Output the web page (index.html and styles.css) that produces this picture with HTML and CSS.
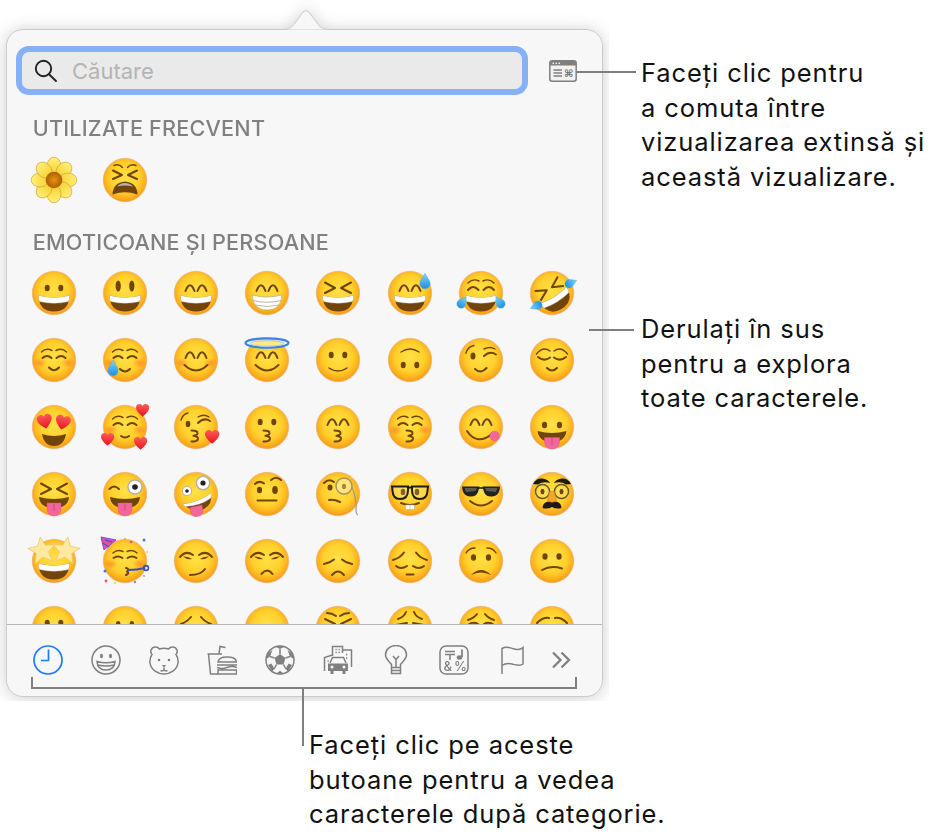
FILE: index.html
```html
<!DOCTYPE html>
<html lang="ro">
<head>
  <meta charset="UTF-8" />
  <title>Vizualizator de caractere</title>
  <link rel="stylesheet" href="styles.css">
</head>
<body>

  <!-- shared pieces for the emoji -->
  <svg class="defs" width="0" height="0" aria-hidden="true">
    <defs>
      <radialGradient id="skin" cx="50%" cy="44%" r="56%">
        <stop offset="0" stop-color="#ffe146"/>
        <stop offset=".6" stop-color="#ffd02c"/>
        <stop offset=".86" stop-color="#fbae1c"/>
        <stop offset="1" stop-color="#f49a16"/>
      </radialGradient>
      <radialGradient id="cheek">
        <stop offset="0" stop-color="#ff6a2c" stop-opacity=".55"/>
        <stop offset="1" stop-color="#ff6a2c" stop-opacity="0"/>
      </radialGradient>
      <linearGradient id="water" x1="0" y1="0" x2="0" y2="1">
        <stop offset="0" stop-color="#7fd6fa"/>
        <stop offset="1" stop-color="#1c8fe2"/>
      </linearGradient>
      <linearGradient id="red" x1="0" y1="0" x2="0" y2="1">
        <stop offset="0" stop-color="#ff5a5a"/>
        <stop offset="1" stop-color="#e3161f"/>
      </linearGradient>
      <radialGradient id="bloom">
        <stop offset="0" stop-color="#e8920f"/>
        <stop offset="1" stop-color="#ac5f06"/>
      </radialGradient>
      <linearGradient id="leaf" x1="0" y1="0" x2="0" y2="1">
        <stop offset="0" stop-color="#fff07a"/>
        <stop offset="1" stop-color="#f7cf30"/>
      </linearGradient>

      <circle id="face" cx="22" cy="22" r="21.7" fill="url(#skin)" stroke="#e8a878" stroke-width=".6"/>
      <g id="blush">
        <ellipse cx="7.5" cy="25" rx="7" ry="5" fill="url(#cheek)"/>
        <ellipse cx="36.5" cy="25" rx="7" ry="5" fill="url(#cheek)"/>
      </g>
      <g id="dots">
        <ellipse class="ink" cx="15.2" cy="17" rx="2.5" ry="3.3"/>
        <ellipse class="ink" cx="28.8" cy="17" rx="2.5" ry="3.3"/>
      </g>
      <g id="arches">
        <path class="ln" d="M11.5 20Q16 8.500 20.500 20"/>
        <path class="ln" d="M23.500 20Q28 8.500 32.500 20"/>
      </g>
      <g id="squint">
        <path class="ln" d="M9 11.500L19 17L9 22"/>
        <path class="ln" d="M35 11.500L25 17L35 22"/>
      </g>
      <g id="calm">
        <path class="thin" d="M9.500 14Q14 9.500 20 12.500"/>
        <path class="thin" d="M34.500 14Q30 9.500 24 12.500"/>
        <path class="ln" d="M10.500 20Q15 16 19.500 20"/>
        <path class="ln" d="M33.500 20Q29 16 24.500 20"/>
      </g>
      <g id="grin">
        <path class="ink" d="M6.500 24.500Q22 28.500 37.500 24.500Q37 40.500 22 40.500Q7 40.500 6.500 24.500Z"/>
        <path fill="#fff" stroke="#c9c2b4" stroke-width=".4" d="M6.500 24.500Q22 28.500 37.500 24.500Q37.500 28 36.500 30.500Q22 34 7.500 30.500Q6.500 28 6.500 24.500Z"/>
      </g>
      <path id="drop" fill="url(#water)" stroke="#4aa6e0" stroke-width=".3" d="M0-6C2-2 4-.5 4 2A4 4 0 0 1-4 2C-4-.5-2-2 0-6Z"/>
      <path id="heart" fill="url(#red)" d="M6 11.500C1 7.500 0 5 0 3.200C0 1 1.800 0 3.300 0C4.600 0 5.500.8 6 1.800C6.500.8 7.400 0 8.700 0C10.200 0 12 1 12 3.200C12 5 11 7.500 6 11.500Z"/>
      <path id="kiss" class="ln" d="M18.500 25.500Q25 25.500 24.500 28.500Q24 30.500 20.500 30.800Q25.500 31.500 25 34Q24 37 18.500 36.500"/>
      <g id="tongue-mouth">
        <path class="ink" d="M7.500 26Q22 30 36.500 26Q35 37 22 37Q9 37 7.500 26Z"/>
        <path fill="#f2679b" stroke="#e04b84" stroke-width=".4" d="M14.500 32.500H29.500V37A7.500 7 0 0 1 14.500 37Z"/>
        <path fill="none" stroke="#c9386f" stroke-width=".7" d="M22 33V39"/>
      </g>
      <g id="tongue-grin">
        <path class="ink" d="M7 25Q22 29 37 25Q36 36 22 36Q8 36 7 25Z"/>
        <path fill="#f2679b" stroke="#e04b84" stroke-width=".4" d="M15 31H29V37A7 7 0 0 1 15 37Z"/>
        <path fill="none" stroke="#c9386f" stroke-width=".7" d="M22 32V39"/>
      </g>
      <path id="star" fill="#ffe9a0" stroke="#eec468" stroke-width=".5" d="M0-9L2.700-3 9.500-2.500 4.300 1.800 6 8.500 0 5 -6 8.500-4.300 1.800-9.500-2.500-2.700-3Z"/>
    </defs>
  </svg>

  <main class="figure">
    <div class="stage">
      <section class="popover">
        <svg class="beak" viewBox="0 0 48 24" width="48" height="24" aria-hidden="true">
          <path class="beak-fill" d="M0 23.500C7 23.500 9 22 12 18.500L21 6Q24 3 27 6L36 18.500C39 22 41 23.500 48 23.500Z"/>
          <path class="beak-edge" d="M0 23.500C7 23.500 9 22 12 18.500L21 6Q24 3 27 6L36 18.500C39 22 41 23.500 48 23.500"/>
        </svg>

        <div class="search-row">
          <label class="search">
            <svg class="search-ic" viewBox="0 0 24 24" width="24" height="24" aria-hidden="true">
              <circle cx="9.500" cy="9.500" r="7.700"/>
              <path d="M15 15.200L22 22"/>
            </svg>
            <input type="text" placeholder="Căutare" />
          </label>
          <svg class="viewer-ic" viewBox="0 0 28 22" width="28" height="22" aria-hidden="true">
            <rect class="viewer-frame" x=".8" y=".8" width="26.400" height="20.400" rx="2.500"/>
            <path class="viewer-bar" d="M1 3.300A2.500 2.500 0 0 1 3.500 1H24.500A2.500 2.500 0 0 1 27 3.300V5.500H1Z"/>
            <circle class="viewer-dot" cx="4.300" cy="3.300" r=".9"/>
            <circle class="viewer-dot" cx="7.300" cy="3.300" r=".9"/>
            <circle class="viewer-dot" cx="10.300" cy="3.300" r=".9"/>
            <path class="viewer-line" d="M4.500 10H13M4.500 13H13M4.500 16H13"/>
            <text class="viewer-cmd" x="15" y="17">⌘</text>
          </svg>
        </div>

        <div class="scroller">
          <h2 class="group-title first">UTILIZATE FRECVENT</h2>
          <div class="emoji-grid">
            <svg class="emoji" viewBox="0 0 44 44">
              <g class="petal"><ellipse cx="22" cy="8" rx="7" ry="8.800"/><ellipse cx="22" cy="8" rx="7" ry="8.800" transform="rotate(45 22 22)"/><ellipse cx="22" cy="8" rx="7" ry="8.800" transform="rotate(90 22 22)"/><ellipse cx="22" cy="8" rx="7" ry="8.800" transform="rotate(135 22 22)"/><ellipse cx="22" cy="8" rx="7" ry="8.800" transform="rotate(180 22 22)"/><ellipse cx="22" cy="8" rx="7" ry="8.800" transform="rotate(225 22 22)"/><ellipse cx="22" cy="8" rx="7" ry="8.800" transform="rotate(270 22 22)"/><ellipse cx="22" cy="8" rx="7" ry="8.800" transform="rotate(315 22 22)"/></g>
              <circle cx="22" cy="22" r="8.300" fill="url(#bloom)"/>
            </svg>
            <svg class="emoji" viewBox="0 0 44 44"><use href="#face"/>
              <path class="thin" d="M11 7.500Q16 5.500 19.500 9.500"/><path class="thin" d="M33 7.500Q28 5.500 24.500 9.500"/>
              <path class="ln" d="M10 12.500L19 17L10 21"/><path class="ln" d="M34 12.500L25 17L34 21"/>
              <path class="ink" d="M9.500 36.500Q10 24.500 22 23.500Q34 24.500 34.500 36.500Q22 32 9.500 36.500Z"/>
              <path fill="#b9b3a8" d="M14 28.500Q17 25 22 25Q27 25 30 28.500Q22 26.500 14 28.500Z"/>
            </svg>
          </div>

          <h2 class="group-title">EMOTICOANE ȘI PERSOANE</h2>
          <div class="emoji-grid">
            <!-- row 1 -->
            <svg class="emoji" viewBox="0 0 44 44"><use href="#face"/><use href="#dots"/><use href="#grin"/></svg>
            <svg class="emoji" viewBox="0 0 44 44"><use href="#face"/><ellipse class="ink" cx="15.200" cy="15" rx="2.600" ry="5.500"/><ellipse class="ink" cx="28.800" cy="15" rx="2.600" ry="5.500"/><use href="#grin"/></svg>
            <svg class="emoji" viewBox="0 0 44 44"><use href="#face"/><use href="#arches"/><use href="#grin"/></svg>
            <svg class="emoji" viewBox="0 0 44 44"><use href="#face"/><use href="#arches"/>
              <path fill="#fff" stroke="#a89f8c" stroke-width=".6" d="M7 24Q22 28 37 24Q36 39 22 39Q8 39 7 24Z"/>
              <path fill="none" stroke="#b7ad98" stroke-width=".9" d="M8 29.500Q22 33 36 29.500M10 34Q22 37 34 34"/>
            </svg>
            <svg class="emoji" viewBox="0 0 44 44"><use href="#face"/><use href="#squint"/><use href="#grin"/></svg>
            <svg class="emoji" viewBox="0 0 44 44"><use href="#face"/><use href="#arches"/><use href="#grin"/><use href="#drop" transform="translate(37 10) scale(1.300)"/></svg>
            <svg class="emoji" viewBox="0 0 44 44"><use href="#face"/>
              <path class="thin" d="M9 12Q14 7 20 10"/><path class="thin" d="M35 12Q30 7 24 10"/>
              <path class="ln" d="M9 19Q14 13 19.500 19"/><path class="ln" d="M35 19Q30 13 24.500 19"/>
              <use href="#grin"/>
              <use href="#drop" transform="translate(3.500 31) rotate(35) scale(1.100)"/>
              <use href="#drop" transform="translate(40.500 31) rotate(-35) scale(1.100)"/>
            </svg>
            <svg class="emoji" viewBox="0 0 44 44"><use href="#face"/>
              <g transform="rotate(-32 22 22)"><use href="#squint"/><use href="#grin"/></g>
              <use href="#drop" transform="translate(41 12) rotate(65) scale(1.050)"/>
              <use href="#drop" transform="translate(6 35) rotate(-115 0 0) scale(1.050)"/>
            </svg>

            <!-- row 2 -->
            <svg class="emoji" viewBox="0 0 44 44"><use href="#face"/><use href="#blush"/><use href="#calm"/><path class="ln" d="M17 29.500Q22 35 27 29.500"/></svg>
            <svg class="emoji" viewBox="0 0 44 44"><use href="#face"/><use href="#blush"/><use href="#calm"/><path class="ln" d="M17 31Q22 36 27 31"/><use href="#drop" transform="translate(10 30) scale(1.300)"/></svg>
            <svg class="emoji" viewBox="0 0 44 44"><use href="#face"/><use href="#blush"/><use href="#arches"/><path class="ln" d="M10.500 27Q22 38 33.500 27"/></svg>
            <svg class="emoji" viewBox="0 0 44 44"><use href="#face"/><use href="#arches"/><path class="ln" d="M10.500 27Q22 38 33.500 27"/>
              <ellipse cx="22" cy="5" rx="21.500" ry="4.700" fill="#d8eefc" fill-opacity=".45" stroke="#3c83e8" stroke-width="2.200"/>
              <ellipse cx="22" cy="5.500" rx="17" ry="2.700" fill="#ffe98a" stroke="#9fd4fa" stroke-width="1"/>
            </svg>
            <svg class="emoji" viewBox="0 0 44 44"><use href="#face"/><use href="#dots"/><path class="thin" d="M13 30Q22 36 31 30"/></svg>
            <svg class="emoji" viewBox="0 0 44 44"><use href="#face"/><g transform="rotate(180 22 22)"><use href="#dots"/><path class="thin" d="M13 30Q22 36 31 30"/></g></svg>
            <svg class="emoji" viewBox="0 0 44 44"><use href="#face"/>
              <path class="thin" d="M7 15Q9 8.500 15 7.500"/><ellipse class="ink" cx="14" cy="18" rx="2.500" ry="3.500"/>
              <path class="ln" d="M25 18Q31 12.500 37 16.500"/><path class="thin" d="M25 11Q31 8 36 11"/>
              <path class="ln" d="M16 31Q22 36.500 27.500 30"/>
            </svg>
            <svg class="emoji" viewBox="0 0 44 44"><use href="#face"/>
              <path class="thin" d="M6.500 16Q13 8 20 13"/><path class="thin" d="M37.500 16Q31 8 24 13"/>
              <path class="ln" d="M8 19Q14 24 20 19.500"/><path class="ln" d="M36 19Q30 24 24 19.500"/>
              <path class="ln" d="M17 30Q22 35 27 30"/>
            </svg>

            <!-- row 3 -->
            <svg class="emoji" viewBox="0 0 44 44"><use href="#face"/>
              <use href="#heart" transform="translate(4 11) rotate(-12) scale(1.250)"/>
              <use href="#heart" transform="translate(25 9) rotate(12) scale(1.250)"/>
              <path class="ink" d="M10 29Q22 33 34 29Q32 41 22 41Q12 41 10 29Z"/>
            </svg>
            <svg class="emoji" viewBox="0 0 44 44"><use href="#face"/><use href="#blush"/><use href="#calm"/><path class="ln" d="M18 31Q22 34 26 31"/>
              <use href="#heart" transform="translate(33 -1) scale(1.100)"/>
              <use href="#heart" transform="translate(-2 28) scale(1.100)"/>
              <use href="#heart" transform="translate(31 32) scale(1.100)"/>
            </svg>
            <svg class="emoji" viewBox="0 0 44 44"><use href="#face"/>
              <path class="thin" d="M7 15Q9 9 14 8"/><ellipse class="ink" cx="14" cy="19" rx="2.300" ry="3.200"/>
              <path class="ln" d="M24 18Q30 12 36 16"/><path class="thin" d="M24 12Q30 8.500 35 12"/>
              <use href="#kiss" transform="translate(-1 0)"/>
              <use href="#heart" transform="translate(31 25) scale(1.200)"/>
            </svg>
            <svg class="emoji" viewBox="0 0 44 44"><use href="#face"/><use href="#dots"/><use href="#kiss"/></svg>
            <svg class="emoji" viewBox="0 0 44 44"><use href="#face"/><use href="#arches"/><use href="#kiss"/></svg>
            <svg class="emoji" viewBox="0 0 44 44"><use href="#face"/><use href="#blush"/><use href="#calm"/><use href="#kiss"/></svg>
            <svg class="emoji" viewBox="0 0 44 44"><use href="#face"/><use href="#arches"/><path class="ln" d="M8 26Q18 41 33 29"/>
              <circle cx="35.500" cy="31" r="4.800" fill="#f2679b" stroke="#e04b84" stroke-width=".4"/>
            </svg>
            <svg class="emoji" viewBox="0 0 44 44"><use href="#face"/><ellipse class="ink" cx="14.500" cy="20" rx="2.600" ry="3.300"/><ellipse class="ink" cx="29.500" cy="20" rx="2.600" ry="3.300"/><use href="#tongue-mouth"/></svg>

            <!-- row 4 -->
            <svg class="emoji" viewBox="0 0 44 44"><use href="#face"/><use href="#squint"/><use href="#tongue-grin"/></svg>
            <svg class="emoji" viewBox="0 0 44 44"><use href="#face"/><path class="ln" d="M6.500 17Q11 12 16 17"/>
              <circle cx="32" cy="15" r="7" fill="#fff" stroke="#b5b0a6" stroke-width="1.500"/><circle cx="32" cy="15" r="2.800" fill="#222"/>
              <use href="#tongue-grin"/>
            </svg>
            <svg class="emoji" viewBox="0 0 44 44"><use href="#face"/>
              <circle cx="13" cy="19" r="4.700" fill="#fff" stroke="#b5b0a6" stroke-width="1"/><circle cx="13" cy="19" r="1.800" fill="#222"/>
              <circle cx="29" cy="11" r="6.700" fill="#fff" stroke="#b5b0a6" stroke-width="1.400"/><circle cx="29" cy="11" r="2.600" fill="#222"/>
              <path class="ink" d="M9 32Q26 30 37 21Q39 32 30 37Q20 42 9 32Z"/>
              <path fill="#fff" stroke="#c9c2b4" stroke-width=".4" d="M9 32Q26 30 37 21Q37.500 24 37 26Q26 34 11 34.500Z"/>
              <path fill="#f2679b" stroke="#e04b84" stroke-width=".4" d="M16 35.500L28 33L29 39A6.500 6.500 0 0 1 16.500 40.500Z"/>
            </svg>
            <svg class="emoji" viewBox="0 0 44 44"><use href="#face"/>
              <path class="ln" d="M10 12Q14 8 19 11.500"/><path class="ln" d="M26 8Q31 3.500 36 8"/>
              <ellipse class="ink" cx="14.500" cy="18" rx="2.600" ry="3.300"/><ellipse class="ink" cx="30" cy="18" rx="2.800" ry="4"/>
              <path class="ln" d="M12.500 28.500H31.500"/>
            </svg>
            <svg class="emoji" viewBox="0 0 44 44"><use href="#face"/>
              <path class="ln" d="M8 11Q13 6 18 10"/><ellipse class="ink" cx="14" cy="15.500" rx="2.500" ry="3"/>
              <path class="ln" d="M13 28Q18 27 24 30"/>
              <circle cx="28" cy="14" r="8" fill="#fff3b8" fill-opacity=".55" stroke="#a8915a" stroke-width="1.400"/>
              <ellipse class="ink" cx="28" cy="14.500" rx="2" ry="2.800" opacity=".6"/>
              <path fill="none" stroke="#9a9a94" stroke-width="1.200" d="M36 15Q41 27 40 40L41.500 43"/>
            </svg>
            <svg class="emoji" viewBox="0 0 44 44"><use href="#face"/>
              <ellipse class="ink" cx="15" cy="20" rx="2.300" ry="3.200"/><ellipse class="ink" cx="29" cy="20" rx="2.300" ry="3.200"/>
              <path fill="#fff" fill-opacity=".15" stroke="#1c1c1c" stroke-width="2" d="M4 14.500H20V18Q20 27 12 27Q5 27 4.500 19ZM24 14.500H40L39.500 19Q39 27 32 27Q24 27 24 18ZM20 15.500H24"/>
              <path class="ln" d="M13 31Q22 35 31 31"/>
              <path fill="#fff" stroke="#b5b0a6" stroke-width=".6" d="M17.500 33H26.500V37.500H17.500Z"/><path fill="none" stroke="#b5b0a6" stroke-width=".6" d="M22 33V37.500"/>
            </svg>
            <svg class="emoji" viewBox="0 0 44 44"><use href="#face"/>
              <path fill="#222" d="M3 14.500H20.500L19 20Q17 25 11 24.500Q5 24 3.500 18ZM41 14.500H23.500L25 20Q27 25 33 24.500Q39 24 40.500 18Z"/>
              <path fill="#5a5a5a" d="M5.500 16H18L16.500 19L7 20Z"/><path fill="#5a5a5a" d="M38.500 16H26L27.500 19L37 20Z"/>
              <path fill="none" stroke="#222" stroke-width="1.600" d="M19 16H25"/>
              <path class="ln" d="M11 29Q22 38 33 29"/>
            </svg>
            <svg class="emoji" viewBox="0 0 44 44"><use href="#face"/>
              <path fill="#1f1a16" d="M3 12Q6 6 12 6.500Q18 7 20 11Q13 9 8 12.500ZM41 12Q38 6 32 6.500Q26 7 24 11Q31 9 36 12.500Z"/>
              <circle cx="12.500" cy="19.500" r="7" fill="#ffe98f" fill-opacity=".35" stroke="#5e5a30" stroke-width="1.500"/>
              <circle cx="31.500" cy="19.500" r="7" fill="#ffe98f" fill-opacity=".35" stroke="#5e5a30" stroke-width="1.500"/>
              <ellipse class="ink" cx="12.500" cy="19.500" rx="2" ry="2.700"/><ellipse class="ink" cx="31.500" cy="19.500" rx="2" ry="2.700"/>
              <path fill="#1f1a16" d="M12.500 36Q13 29.500 19 29.500H25Q31 29.500 31.500 36Q26 37.500 22 35Q18 37.500 12.500 36Z"/>
              <path fill="#f4a52c" stroke="#c87b16" stroke-width=".5" d="M19.500 19.500H24.500L26.500 29Q22 31.500 17.500 29Z"/>
            </svg>

            <!-- row 5 -->
            <svg class="emoji" viewBox="0 0 44 44"><use href="#face"/>
              <use href="#grin"/>
              <use href="#star" transform="translate(10 11) rotate(-8) scale(1.450)"/>
              <use href="#star" transform="translate(34 11) rotate(8) scale(1.450)"/>
            </svg>
            <svg class="emoji" viewBox="0 0 44 44"><use href="#face"/><use href="#blush"/>
              <path class="thin" d="M10 14Q14 10 20 12.500"/><path class="thin" d="M34 14Q30 10 24 12.500"/>
              <path class="ln" d="M10.500 19Q15 16 19.500 19"/><path class="ln" d="M33.500 19Q29 16 24.500 19"/>
              <path fill="#e84fa3" stroke="#7d4bd6" stroke-width="1" d="M-2-2L13 1L1 11Z"/>
              <path fill="none" stroke="#5a4fd6" stroke-width="1.400" d="M2 1L9 3M0 4L6 8"/>
              <path class="ln" d="M23 29Q27 30 24 32.500Q27 34 23 36"/>
              <path fill="none" stroke="#3c4fb8" stroke-width="2" d="M25 31Q34 31 42 29"/>
              <circle cx="43" cy="29" r="2.400" fill="none" stroke="#3c4fb8" stroke-width="1.600"/>
              <circle cx="28" cy="3" r="1.300" fill="#ef4f7b"/><circle cx="41" cy="1" r="1.500" fill="#3f7de8"/><circle cx="22" cy="0" r="1.100" fill="#f6a63a"/><circle cx="44" cy="13" r="1.300" fill="#ffe13c"/>
              <circle cx="2" cy="32" r="1.500" fill="#3f7de8"/><circle cx="3" cy="42" r="1.400" fill="#ef4f7b"/><circle cx="12" cy="44" r="1.200" fill="#ffe13c"/><circle cx="32" cy="43" r="1.100" fill="#3f7de8"/><circle cx="41" cy="37" r="1.100" fill="#f6a63a"/>
            </svg>
            <svg class="emoji" viewBox="0 0 44 44"><use href="#face"/>
              <path class="ln" d="M6 18Q12 11 19 16"/><path class="ln" d="M38 18Q32 11 25 16"/>
              <path class="ink" d="M9 17.500Q14 17 18 20Q13 21 9 17.500ZM35 17.500Q30 17 26 20Q31 21 35 17.500Z"/>
              <path class="ln" d="M16 36Q27 36 31 30"/>
            </svg>
            <svg class="emoji" viewBox="0 0 44 44"><use href="#face"/>
              <path class="ln" d="M6 18Q12 11 19 16"/><path class="ln" d="M38 18Q32 11 25 16"/>
              <path class="ink" d="M9 17.500Q14 17 18 20Q13 21 9 17.500ZM35 17.500Q30 17 26 20Q31 21 35 17.500Z"/>
              <path class="ln" d="M16.500 35Q22 28 27.500 35"/>
            </svg>
            <svg class="emoji" viewBox="0 0 44 44"><use href="#face"/>
              <path class="ln" d="M8 25Q14 24 18 20.500"/><path class="ln" d="M36 25Q30 24 26 20.500"/>
              <path class="ln" d="M16 36Q22 29 28 36"/>
            </svg>
            <svg class="emoji" viewBox="0 0 44 44"><use href="#face"/>
              <path class="ln" d="M5 21Q12 19 16 13.500"/><path class="ln" d="M39 21Q32 19 28 13.500"/>
              <path class="ln" d="M8 27Q13 31 19 27"/><path class="ln" d="M36 27Q31 31 25 27"/>
              <path class="ln" d="M18.500 35.500H25.500"/>
            </svg>
            <svg class="emoji" viewBox="0 0 44 44"><use href="#face"/>
              <path class="thin" d="M7 14Q10 9 16 9"/><path class="thin" d="M37 14Q34 9 28 9"/>
              <ellipse class="ink" cx="14.500" cy="18.500" rx="2.600" ry="3.300"/><ellipse class="ink" cx="29.500" cy="18.500" rx="2.600" ry="3.300"/>
              <path class="ink" d="M12 36Q22 26 32 36Q22 31 12 36Z"/>
            </svg>
            <svg class="emoji" viewBox="0 0 44 44"><use href="#face"/><ellipse class="ink" cx="15" cy="17.500" rx="2.600" ry="3.300"/><ellipse class="ink" cx="29" cy="17.500" rx="2.600" ry="3.300"/><path class="ln" d="M12 31Q21 26 32 29.500"/></svg>

            <!-- row 6, cut by the toolbar -->
            <svg class="emoji" viewBox="0 0 44 44"><use href="#face"/><use href="#dots"/></svg>
            <svg class="emoji" viewBox="0 0 44 44"><use href="#face"/><ellipse class="ink" cx="15.200" cy="18" rx="2.200" ry="3"/><ellipse class="ink" cx="28.800" cy="18" rx="2.200" ry="3"/></svg>
            <svg class="emoji" viewBox="0 0 44 44"><use href="#face"/><path class="ln" d="M7 18Q13 16 17 11"/><path class="ln" d="M37 18Q31 16 27 11"/></svg>
            <svg class="emoji" viewBox="0 0 44 44"><use href="#face"/></svg>
            <svg class="emoji" viewBox="0 0 44 44"><use href="#face"/><path class="ln" d="M11 7Q16 7 20 10"/><path class="ln" d="M33 7Q28 7 24 10"/><path class="ln" d="M9 13L19 18L9 22"/><path class="ln" d="M35 13L25 18L35 22"/></svg>
            <svg class="emoji" viewBox="0 0 44 44"><use href="#face"/><path class="ln" d="M18 6Q16 11 10 13"/><path class="ln" d="M26 6Q28 11 34 13"/><path class="ln" d="M8 19L19 17"/><path class="ln" d="M36 19L25 17"/></svg>
            <svg class="emoji" viewBox="0 0 44 44"><use href="#face"/><path class="ln" d="M18 8Q15 12 9 14"/><path class="ln" d="M26 8Q29 12 35 14"/><path class="ln" d="M9 19Q14 15 19 18"/><path class="ln" d="M35 19Q30 15 25 18"/></svg>
            <svg class="emoji" viewBox="0 0 44 44"><use href="#face"/><path class="ln" d="M7 17Q13 11 19 12"/><path class="ln" d="M37 17Q31 11 25 12"/></svg>
          </div>
        </div>

        <div class="toolbar">
          <svg class="tool active" viewBox="0 0 30 30"><circle cx="15" cy="15" r="14"/><path d="M15.500 4.500V15.500H8"/></svg>
          <svg class="tool" viewBox="0 0 30 30"><circle cx="15" cy="15" r="14"/><ellipse class="tool-solid" cx="10.500" cy="11" rx="1.500" ry="2.300"/><ellipse class="tool-solid" cx="19.500" cy="11" rx="1.500" ry="2.300"/><path d="M6 16.500Q15 19 24 16.500Q23.500 25 15 25Q6.500 25 6 16.500ZM7 20Q15 22 23 20"/></svg>
          <svg class="tool" viewBox="0 0 30 30"><path d="M6.500 2A4.500 4.500 0 0 0 3 9.500C1 12.500.5 15 1 18C2 25 9 29 15 29C21 29 28 25 29 18C29.500 15 29 12.500 27 9.500A4.500 4.500 0 0 0 23.500 2A5 5 0 0 0 19.500 4Q15 2.500 10.500 4A5 5 0 0 0 6.500 2Z"/><circle class="tool-solid" cx="10" cy="15" r="1.300"/><circle class="tool-solid" cx="20" cy="15" r="1.300"/><path class="tool-solid" d="M12.800 20H17.200L15 22.500Z"/><path d="M15 22.500V25M11.500 25.500Q13.500 26.500 15 25Q16.500 26.500 18.500 25.500"/></svg>
          <svg class="tool" viewBox="0 0 30 30"><path d="M.5 9H15M1.500 9L3.500 29H11M12 9L13 1.500L18.500 2.500"/><path d="M11 17Q11.500 12 20 12Q29 12 29.500 17ZM10 20H30M10 22.500Q15 24.500 20 22.500T30 22.500M11 25H29.500V29H11Z"/></svg>
          <svg class="tool" viewBox="0 0 30 30"><circle cx="15" cy="15" r="14"/><path class="tool-solid" d="M15 9L20.500 13L18.500 19.500H11.500L9.500 13ZM10.500 1.800L15 4L19.500 1.800L14.500.8ZM22.500 5L27.500 8.500L28.500 14L25 11.500ZM7.500 5L2.500 8.500L1.500 14L5 11.500ZM3 20L6.500 18.500L9.500 24L7 26.500ZM27 20L23.500 18.500L20.500 24L23 26.500ZM11.500 28.500L15 25.800L18.500 28.500L15 29.200Z"/><path d="M15 9V4M20.500 13L25 11.500M9.500 13L5 11.500M18.500 19.500L21 24M11.500 19.500L9 24"/></svg>
          <svg class="tool" viewBox="0 0 30 30"><path d="M9.500 11V1.500H19.500V8M19.500 5H28.500V22M1.500 26V12.500L9.500 10"/><path class="tool-dots" d="M12.500 4.500H13.800M15.500 4.500H16.800M12.500 7.500H13.800M15.500 7.500H16.800M23 9.500H24.300M23 13H24.300M4.500 16H5.800"/><path d="M7 18L9.500 12.500H20.500L23 18"/><path class="tool-solid" d="M5 18.500H25V26H22.500V29H19.500V26H10.500V29H7.500V26H5Z"/><circle class="tool-cut" cx="9" cy="22" r="1.500"/><circle class="tool-cut" cx="21" cy="22" r="1.500"/></svg>
          <svg class="tool" viewBox="0 0 30 30"><path d="M10.500 22.500V19.500C8.500 16.500 4.500 14.500 4.500 9.500A10.500 9 0 0 1 25.500 9.500C25.500 14.500 21.500 16.500 19.500 19.500V22.500ZM10.500 22.500V28.500H19.500V22.500M11 25.500H19"/><path d="M12 11L15 14.500L18 11M15 14.500V22"/></svg>
          <svg class="tool" viewBox="0 0 30 30">
            <rect x="1" y="1" width="28" height="28" rx="6"/>
            <path d="M6 6.500H16M6 9.500H16M11 9.500V15"/>
            <path class="tool-thick" d="M23 4.500V12"/><ellipse class="tool-solid" cx="20.500" cy="12.500" rx="2.800" ry="2.200"/>
            <text class="tool-text" x="4.500" y="25.500">&amp;</text><text class="tool-text" x="15" y="25.500">%</text>
          </svg>
          <svg class="tool" viewBox="0 0 30 30"><path d="M5 29V3.500C10 .5 13 3 17 4C21 5 24 4.500 26 2.500V19C23 21.500 19 20 15 19C11 18 8 18.500 5 20.500"/></svg>
          <svg class="tool more" viewBox="0 0 30 30"><path d="M7 7.500L14.500 15L7 22.500M15.500 7.500L23 15L15.500 22.500"/></svg>
        </div>
      </section>
    </div>

    <div class="side">
      <p class="note note-view">Faceți clic pentru<br>a comuta între<br>vizualizarea extinsă și<br>această vizualizare.</p>
      <p class="note note-scroll">Derulați în sus<br>pentru a explora<br>toate caracterele.</p>
    </div>

    <p class="note note-cats">Faceți clic pe aceste<br>butoane pentru a vedea<br>caracterele după categorie.</p>
  </main>

</body>
</html>
```

FILE: styles.css
```css
* {
  margin: 0;
  padding: 0;
  box-sizing: border-box;
}

body {
  background: #fff;
  color: #111;
  font-family: 'Inter', sans-serif;
  width: 936px;
  height: 838px;
  overflow: hidden;
}

.defs {
  position: absolute;
}

.figure {
  display: grid;
  grid-template-columns: 609px 1fr;
  grid-template-rows: 701px 1fr;
}

/* popover */

.stage {
  height: 701px;
  padding: 29px 6px 4px;
  overflow: hidden;
}

.popover {
  position: relative;
  height: 668px;
  display: flex;
  flex-direction: column;
  background: #f7f7f7;
  border: 1px solid #cbcbcb;
  border-radius: 17px;
  filter: drop-shadow(0 1px 8px rgba(0, 0, 0, 0.2));
}

.beak {
  position: absolute;
  top: -24px;
  left: 275px;
}

.beak-fill {
  fill: #f7f7f7;
}

.beak-edge {
  fill: none;
  stroke: #cbcbcb;
  stroke-width: 1;
}

.search-row {
  display: flex;
  align-items: center;
  gap: 21px;
  padding: 16px 0 0 9px;
}

.search {
  flex: none;
  width: 512px;
  height: 49px;
  display: flex;
  align-items: center;
  gap: 14px;
  padding-left: 12px;
  background: #eaeaea;
  border: 6px solid #86b1f6;
  border-radius: 13px;
}

.search-ic {
  flex: none;
  fill: none;
  stroke: #222;
  stroke-width: 1.9;
  stroke-linecap: round;
}

.search input {
  width: 400px;
  border: none;
  outline: none;
  background: transparent;
  font-family: 'Inter', sans-serif;
  font-size: 22px;
}

.search input::placeholder {
  color: #b4b4b4;
  opacity: 1;
}

.viewer-ic {
  flex: none;
}

.viewer-frame {
  fill: #f2f2f2;
  stroke: #7f7f7f;
  stroke-width: 1.5;
}

.viewer-bar {
  fill: #7f7f7f;
}

.viewer-dot {
  fill: #eee;
}

.viewer-line {
  fill: none;
  stroke: #7f7f7f;
  stroke-width: 1.5;
}

.viewer-cmd {
  fill: #6f6f6f;
  font-family: 'DejaVu Sans', sans-serif;
  font-size: 10px;
  font-weight: 700;
}

.scroller {
  flex: 1;
  overflow: hidden;
  padding-left: 24.7px;
}

.group-title {
  margin: 28px 0 17px 1px;
  font-size: 21.6px;
  line-height: 24px;
  font-weight: 500;
  letter-spacing: 0.22px;
  color: #808080;
}

.group-title.first {
  margin-top: 21px;
  margin-bottom: 18px;
}

.emoji-grid {
  display: grid;
  grid-template-columns: repeat(8, 44px);
  column-gap: 27.2px;
  row-gap: 23px;
}

.emoji {
  display: block;
  width: 44px;
  height: 44px;
  overflow: visible;
}

.ink {
  fill: #70440a;
}

.ln {
  fill: none;
  stroke: #70440a;
  stroke-width: 2;
  stroke-linecap: round;
  stroke-linejoin: round;
}

.thin {
  fill: none;
  stroke: #70440a;
  stroke-width: 1.4;
  stroke-linecap: round;
}

.petal {
  fill: url(#leaf);
  stroke: #d8a02c;
  stroke-width: 0.7;
}

/* category bar */

.toolbar {
  flex: none;
  height: 72px;
  display: flex;
  align-items: flex-start;
  gap: 28px;
  padding: 20px 0 0 26px;
  border-top: 1px solid #b7b7b7;
}

.tool {
  flex: none;
  width: 30px;
  height: 30px;
  fill: none;
  stroke: #808080;
  stroke-width: 1.5;
}

.tool.active {
  stroke: #1a7df5;
  stroke-width: 1.7;
}

.tool.more {
  margin-left: -9px;
  stroke-width: 2.3;
}

.tool-solid {
  fill: #808080;
  stroke: none;
}

.tool-cut {
  fill: #f7f7f7;
  stroke: none;
}

.tool-thick {
  stroke-width: 1.8;
}

.tool-dots {
  stroke-width: 1.4;
}

.tool-text {
  fill: #808080;
  stroke: none;
  font-family: 'Inter', sans-serif;
  font-size: 13px;
  font-weight: 500;
}

/* callouts */

.side {
  padding: 56px 0 0 32px;
}

.note {
  position: relative;
  font-size: 25.5px;
  line-height: 34.7px;
  letter-spacing: 0.9px;
  white-space: nowrap;
}

.note::before {
  content: "";
  position: absolute;
  background: #7f7f7f;
}

.note-view::before {
  top: 15px;
  left: -64px;
  width: 59px;
  height: 2px;
}

.note-scroll {
  margin-top: 117px;
}

.note-scroll::before {
  top: 17px;
  left: -52px;
  width: 45px;
  height: 2px;
}

.note-cats {
  grid-column: 1 / 3;
  margin: 27px 0 0 309px;
}

/* the bracket under the category buttons and its stem */
.note-cats::before {
  top: -51px;
  left: -278px;
  width: 542px;
  height: 10px;
  background: none;
  border: 2px solid #7f7f7f;
  border-top: none;
}

.note-cats::after {
  content: "";
  position: absolute;
  top: -39px;
  left: -7px;
  width: 2px;
  height: 57px;
  background: #7f7f7f;
}
```
